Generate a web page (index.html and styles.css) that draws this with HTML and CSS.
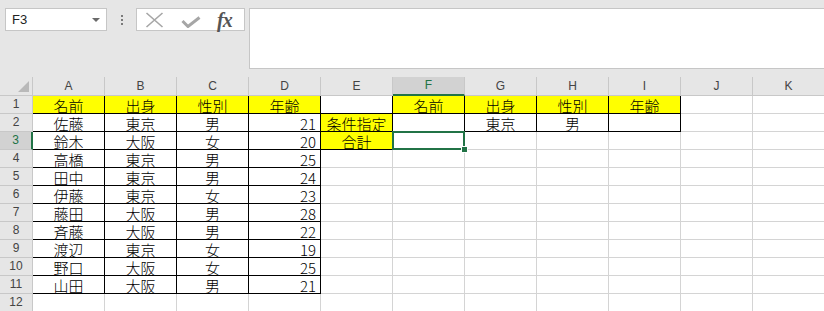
FILE: index.html
```html
<!DOCTYPE html>
<html lang="ja">
<head>
    <meta charset="UTF-8">
    <title>Book1 - Excel</title>
    <link rel="stylesheet" href="styles.css">
</head>
<body>
    <div class="toolbar">
        <div class="namebox">
            <span>F3</span>
            <span class="caret"></span>
        </div>
        <div class="grip"><i></i><i></i><i></i></div>
        <div class="fx-buttons">
            <svg class="icon-cancel" width="19" height="16" viewBox="0 0 19 16">
                <path d="M1.5 1 L17.5 15 M17.5 1 L1.5 15" stroke="#a6a6a6" stroke-width="1.6" fill="none"/>
            </svg>
            <svg class="icon-enter" width="20" height="12" viewBox="0 0 20 12">
                <path d="M1.5 5 L7 10.5 L18.5 1.5" stroke="#a6a6a6" stroke-width="3" fill="none"/>
            </svg>
            <span class="fx">fx</span>
        </div>
        <div class="formula"></div>
    </div>

    <table class="sheet">
        <colgroup>
            <col class="col-head">
            <col span="11" class="col-cell">
        </colgroup>
        <tr class="letters">
            <th class="corner"><span class="select-all"></span></th>
            <th>A</th><th>B</th><th>C</th><th>D</th><th>E</th>
            <th class="active">F</th>
            <th>G</th><th>H</th><th>I</th><th>J</th><th>K</th>
        </tr>
        <tr>
            <th>1</th>
            <td class="k y">名前</td><td class="k y">出身</td><td class="k y">性別</td><td class="k y">年齢</td>
            <td class="k"></td>
            <td class="k y">名前</td><td class="k y">出身</td><td class="k y">性別</td><td class="k y">年齢</td>
            <td></td><td></td>
        </tr>
        <tr>
            <th>2</th>
            <td class="k">佐藤</td><td class="k">東京</td><td class="k">男</td><td class="k n">21</td>
            <td class="k y">条件指定</td>
            <td class="k"></td><td class="k">東京</td><td class="k">男</td><td class="k"></td>
            <td></td><td></td>
        </tr>
        <tr>
            <th class="active">3</th>
            <td class="k">鈴木</td><td class="k">大阪</td><td class="k">女</td><td class="k n">20</td>
            <td class="k y">合計</td>
            <td class="current"><div class="sel"><span class="handle"></span></div></td>
            <td></td><td></td><td></td><td></td><td></td>
        </tr>
        <tr>
            <th>4</th>
            <td class="k">高橋</td><td class="k">東京</td><td class="k">男</td><td class="k n">25</td>
            <td></td><td></td><td></td><td></td><td></td><td></td><td></td>
        </tr>
        <tr>
            <th>5</th>
            <td class="k">田中</td><td class="k">東京</td><td class="k">男</td><td class="k n">24</td>
            <td></td><td></td><td></td><td></td><td></td><td></td><td></td>
        </tr>
        <tr>
            <th>6</th>
            <td class="k">伊藤</td><td class="k">東京</td><td class="k">女</td><td class="k n">23</td>
            <td></td><td></td><td></td><td></td><td></td><td></td><td></td>
        </tr>
        <tr>
            <th>7</th>
            <td class="k">藤田</td><td class="k">大阪</td><td class="k">男</td><td class="k n">28</td>
            <td></td><td></td><td></td><td></td><td></td><td></td><td></td>
        </tr>
        <tr>
            <th>8</th>
            <td class="k">斉藤</td><td class="k">大阪</td><td class="k">男</td><td class="k n">22</td>
            <td></td><td></td><td></td><td></td><td></td><td></td><td></td>
        </tr>
        <tr>
            <th>9</th>
            <td class="k">渡辺</td><td class="k">東京</td><td class="k">女</td><td class="k n">19</td>
            <td></td><td></td><td></td><td></td><td></td><td></td><td></td>
        </tr>
        <tr>
            <th>10</th>
            <td class="k">野口</td><td class="k">大阪</td><td class="k">女</td><td class="k n">25</td>
            <td></td><td></td><td></td><td></td><td></td><td></td><td></td>
        </tr>
        <tr>
            <th>11</th>
            <td class="k">山田</td><td class="k">大阪</td><td class="k">男</td><td class="k n">21</td>
            <td></td><td></td><td></td><td></td><td></td><td></td><td></td>
        </tr>
        <tr>
            <th>12</th>
            <td></td><td></td><td></td><td></td><td></td><td></td><td></td><td></td><td></td><td></td><td></td>
        </tr>
    </table>
</body>
</html>
```

FILE: styles.css
```css
:root {
    --chrome: #e6e6e6;
    --frame: #c6c6c6;
    --grid: #d4d4d4;
    --green: #217346;
    --yellow: #ffff00;
}

html, body {
    margin: 0;
    padding: 0;
    overflow: hidden;
    background: var(--chrome);
}

body {
    width: 824px;
    height: 311px;
}

/* formula bar */
.toolbar {
    display: flex;
    align-items: flex-start;
    height: 77px;
    padding: 8px 0 0 5px;
    box-sizing: border-box;
}

.namebox {
    width: 102px;
    height: 23px;
    box-sizing: border-box;
    border: 1px solid var(--frame);
    background: white;
    display: flex;
    align-items: center;
    justify-content: space-between;
    padding: 0 6px 0 6px;
    font-family: 'Liberation Sans', Arial, sans-serif;
    font-size: 13px;
    color: #222;
}

.caret {
    width: 0;
    height: 0;
    border-left: 4px solid transparent;
    border-right: 4px solid transparent;
    border-top: 4px solid #6a6a6a;
}

.grip {
    display: flex;
    flex-direction: column;
    gap: 2px;
    margin: 7px 0 0 14px;
}

.grip i {
    display: block;
    width: 2px;
    height: 2px;
    background: #7a7a7a;
}

.fx-buttons {
    width: 109px;
    height: 23px;
    box-sizing: border-box;
    margin-left: 13px;
    border: 1px solid var(--frame);
    background: white;
    display: flex;
    align-items: center;
    padding-left: 8px;
}

.icon-cancel {
    margin-top: 1px;
}

.icon-enter {
    margin: 5px 0 0 17px;
}

.fx {
    margin-left: 16px;
    font-family: 'Liberation Serif', 'Times New Roman', serif;
    font-style: italic;
    font-weight: bold;
    font-size: 20px;
    letter-spacing: -1px;
    color: #555;
    line-height: 20px;
}

.formula {
    flex: 1;
    height: 59px;
    margin-left: 4px;
    border: 1px solid var(--frame);
    border-right: none;
    background: white;
}

/* worksheet */
.sheet {
    table-layout: fixed;
    border-collapse: separate;
    border-spacing: 0;
    width: 825px;
    background: white;
    font-family: 'Noto Sans CJK JP', 'Liberation Sans', sans-serif;
    font-weight: 300;
    font-size: 15px;
    color: #000;
}

.col-head {
    width: 33px;
}

.col-cell {
    width: 72px;
}

.sheet tr {
    height: 18px;
}

.sheet td,
.sheet th {
    box-sizing: border-box;
    padding: 0;
    height: 18px;
    white-space: nowrap;
    overflow: visible;
}

.sheet td {
    border-right: 1px solid var(--grid);
    border-bottom: 1px solid var(--grid);
    text-align: center;
    vertical-align: bottom;
    padding-top: 3px;
    line-height: 14px;
}

.sheet th {
    background: var(--chrome);
    border-right: 1px solid #c8c8c8;
    border-bottom: 1px solid #c8c8c8;
    font-family: 'Liberation Sans', Arial, sans-serif;
    font-weight: normal;
    font-size: 12px;
    color: #444;
    text-align: center;
    line-height: 17px;
}

.sheet th.active {
    background: #d2d2d2;
    color: var(--green);
}

.letters th.active {
    border-bottom: 2px solid var(--green);
}

.sheet tr:not(.letters) th.active {
    border-right: 2px solid var(--green);
}

.corner {
    position: relative;
}

.select-all {
    position: absolute;
    right: 3px;
    bottom: 3px;
    width: 0;
    height: 0;
    border-left: 11px solid transparent;
    border-bottom: 11px solid #b9b9b9;
}

.sheet td.k {
    border-right-color: #000;
    border-bottom-color: #000;
}

.sheet td.y {
    background: var(--yellow);
}

.sheet td.n {
    text-align: right;
    padding-right: 4px;
}

.current {
    position: relative;
}

.sel {
    position: absolute;
    left: -1px;
    top: -1px;
    right: -1px;
    bottom: -1px;
    border: 2px solid var(--green);
}

.handle {
    position: absolute;
    right: -5px;
    bottom: -5px;
    width: 5px;
    height: 5px;
    background: var(--green);
    border: 1px solid white;
}
```
